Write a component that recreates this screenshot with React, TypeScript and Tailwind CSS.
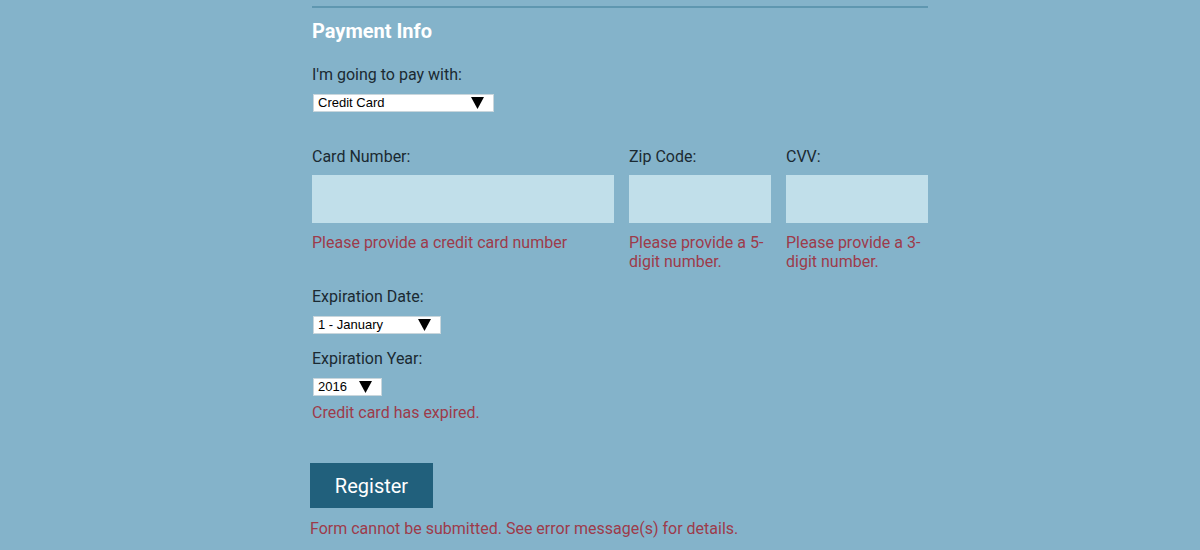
import type { ReactNode } from 'react';

const font = { fontFamily: 'Roboto, "Liberation Sans", sans-serif' };

function Label({ children, className = '' }: { children: ReactNode; className?: string }) {
  return <div className={`text-[16px] leading-[20px] text-[#1b2a32] ${className}`}>{children}</div>;
}

function ErrorText({ children, className = '' }: { children: ReactNode; className?: string }) {
  return <div className={`text-[16px] leading-[19px] text-[#9d3b4b] ${className}`}>{children}</div>;
}

function Select({ value, width, className = '' }: { value: string; width: string; className?: string }) {
  return (
    <div
      className={`relative h-[18px] bg-white border border-[#c9d6dc] flex items-center ml-[1px] ${width} ${className}`}
      style={{ fontFamily: '"Liberation Sans", Arial, sans-serif' }}
    >
      <span className="pl-[4px] text-[13px] leading-[16px] text-black">{value}</span>
      {/* dropdown arrow */}
      <svg className="absolute right-[9px] top-[2px]" width="13" height="12" viewBox="0 0 13 12">
        <polygon points="0,0 13,0 6.5,12" fill="#000" />
      </svg>
    </div>
  );
}

export default function App() {
  return (
    <div className="w-full h-[550px] bg-[#84b3ca] overflow-hidden" style={font}>
      <div className="ml-[312px] w-[616px]">
        <div className="mt-[6px] h-[2px] bg-[#5f97b0]" />

        <h2 className="mt-[11px] text-[20px] leading-[24px] font-bold text-white">Payment Info</h2>

        <Label className="mt-[22px]">I'm going to pay with:</Label>
        <Select value="Credit Card" width="w-[181px]" className="mt-[9px]" />

        <div className="mt-[35px] flex gap-[15px]">
          <div className="w-[302px]">
            <Label>Card Number:</Label>
            <div className="mt-[8px] h-[48px] bg-[#c1dfea]" />
            <ErrorText className="mt-[10px]">Please provide a credit card number</ErrorText>
          </div>
          <div className="w-[142px]">
            <Label>Zip Code:</Label>
            <div className="mt-[8px] h-[48px] bg-[#c1dfea]" />
            <ErrorText className="mt-[10px]">Please provide a 5-digit number.</ErrorText>
          </div>
          <div className="w-[142px]">
            <Label>CVV:</Label>
            <div className="mt-[8px] h-[48px] bg-[#c1dfea]" />
            <ErrorText className="mt-[10px]">Please provide a 3-digit number.</ErrorText>
          </div>
        </div>

        <Label className="mt-[16px]">Expiration Date:</Label>
        <Select value="1 - January" width="w-[128px]" className="mt-[9px]" />

        <Label className="mt-[15px]">Expiration Year:</Label>
        <Select value="2016" width="w-[69px]" className="mt-[9px]" />
        <ErrorText className="mt-[7px] leading-[20px]">Credit card has expired.</ErrorText>

        <button className="mt-[40px] ml-[-2px] w-[123px] h-[45px] bg-[#21607c] text-white text-[20px] leading-[24px] block">
          Register
        </button>
        <ErrorText className="mt-[11px] ml-[-2px] leading-[20px]">
          Form cannot be submitted. See error message(s) for details.
        </ErrorText>
      </div>
    </div>
  );
}
